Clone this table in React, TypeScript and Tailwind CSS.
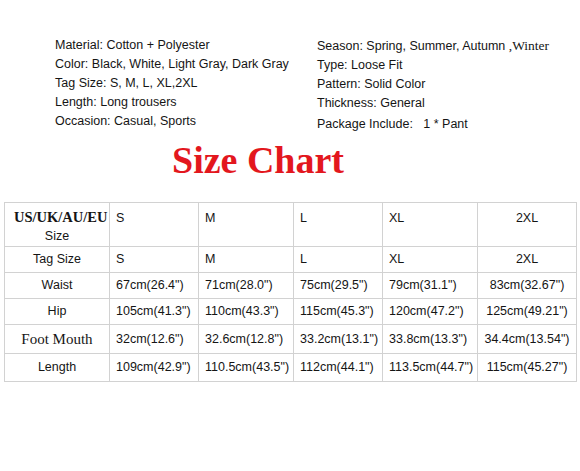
const leftSpecs = [
  'Material: Cotton + Polyester',
  'Color: Black, White, Light Gray, Dark Gray',
  'Tag Size: S, M, L, XL,2XL',
  'Length: Long trousers',
  'Occasion: Casual, Sports',
];

interface Row {
  label: string;
  serif?: boolean;
  height: string;
  values: string[];
}

const rows: Row[] = [
  { label: 'Tag Size', height: 'h-[26px]', values: ['S', 'M', 'L', 'XL', '2XL'] },
  { label: 'Waist', height: 'h-[26px]', values: ['67cm(26.4")', '71cm(28.0")', '75cm(29.5")', '79cm(31.1")', '83cm(32.67")'] },
  { label: 'Hip', height: 'h-[26px]', values: ['105cm(41.3")', '110cm(43.3")', '115cm(45.3")', '120cm(47.2")', '125cm(49.21")'] },
  { label: 'Foot Mouth', serif: true, height: 'h-[29px]', values: ['32cm(12.6")', '32.6cm(12.8")', '33.2cm(13.1")', '33.8cm(13.3")', '34.4cm(13.54")'] },
  { label: 'Length', height: 'h-[28px]', values: ['109cm(42.9")', '110.5cm(43.5")', '112cm(44.1")', '113.5cm(44.7")', '115cm(45.27")'] },
];

const cell = 'border border-[#d2d2d2] px-[6px] p-0';

export default function App() {
  return (
    <main className="w-[580px] h-[471px] bg-white text-[#151515] font-['Liberation_Sans',Arial,sans-serif] text-[12.5px] overflow-hidden">
      {/* Product specs */}
      <div className="flex pt-[36px] pl-[55px] leading-[19px]">
        <div className="w-[262px]">
          {leftSpecs.map((s) => (
            <div key={s}>{s}</div>
          ))}
        </div>
        <div>
          <div>
            Season: Spring, Summer, Autumn{' '}
            <span className="font-['Liberation_Serif',serif] text-[13.5px]">,Winter</span>
          </div>
          <div>Type: Loose Fit</div>
          <div>Pattern: Solid Color</div>
          <div>Thickness: General</div>
          <div className="mt-[2px] whitespace-pre">Package Include:   1 * Pant</div>
        </div>
      </div>

      <h1 className="mt-[7px] ml-[172px] font-['Liberation_Serif',serif] font-bold text-[38px] leading-[38px] text-[#e3171e]">
        Size Chart
      </h1>

      {/* Size table */}
      <table className="mt-[23px] ml-[4px] w-[572px] table-fixed border-collapse">
        <colgroup>
          <col className="w-[105px]" />
          <col className="w-[89px]" />
          <col className="w-[95px]" />
          <col className="w-[89px]" />
          <col className="w-[95px]" />
          <col className="w-[99px]" />
        </colgroup>
        <tbody>
          <tr className="h-[44px] align-top leading-[19px]">
            <td className={`${cell} pt-[5px] text-center`}>
              <div className="font-['Liberation_Serif',serif] font-bold text-[14.5px] whitespace-nowrap pl-[3px]">US/UK/AU/EU</div>
              <div>Size</div>
            </td>
            <td className={`${cell} pt-[6px]`}>S</td>
            <td className={`${cell} pt-[6px]`}>M</td>
            <td className={`${cell} pt-[6px]`}>L</td>
            <td className={`${cell} pt-[6px]`}>XL</td>
            <td className={`${cell} pt-[6px] text-center`}>2XL</td>
          </tr>
          {rows.map((r) => (
            <tr key={r.label} className={`${r.height} align-middle`}>
              <td
                className={`${cell} text-center ${
                  r.serif ? "font-['Liberation_Serif',serif] text-[15px]" : ''
                }`}
              >
                {r.label}
              </td>
              {r.values.map((v, i) => (
                <td key={i} className={`${cell} whitespace-nowrap ${i === 4 ? 'text-center' : ''}`}>
                  {v}
                </td>
              ))}
            </tr>
          ))}
        </tbody>
      </table>
    </main>
  );
}
